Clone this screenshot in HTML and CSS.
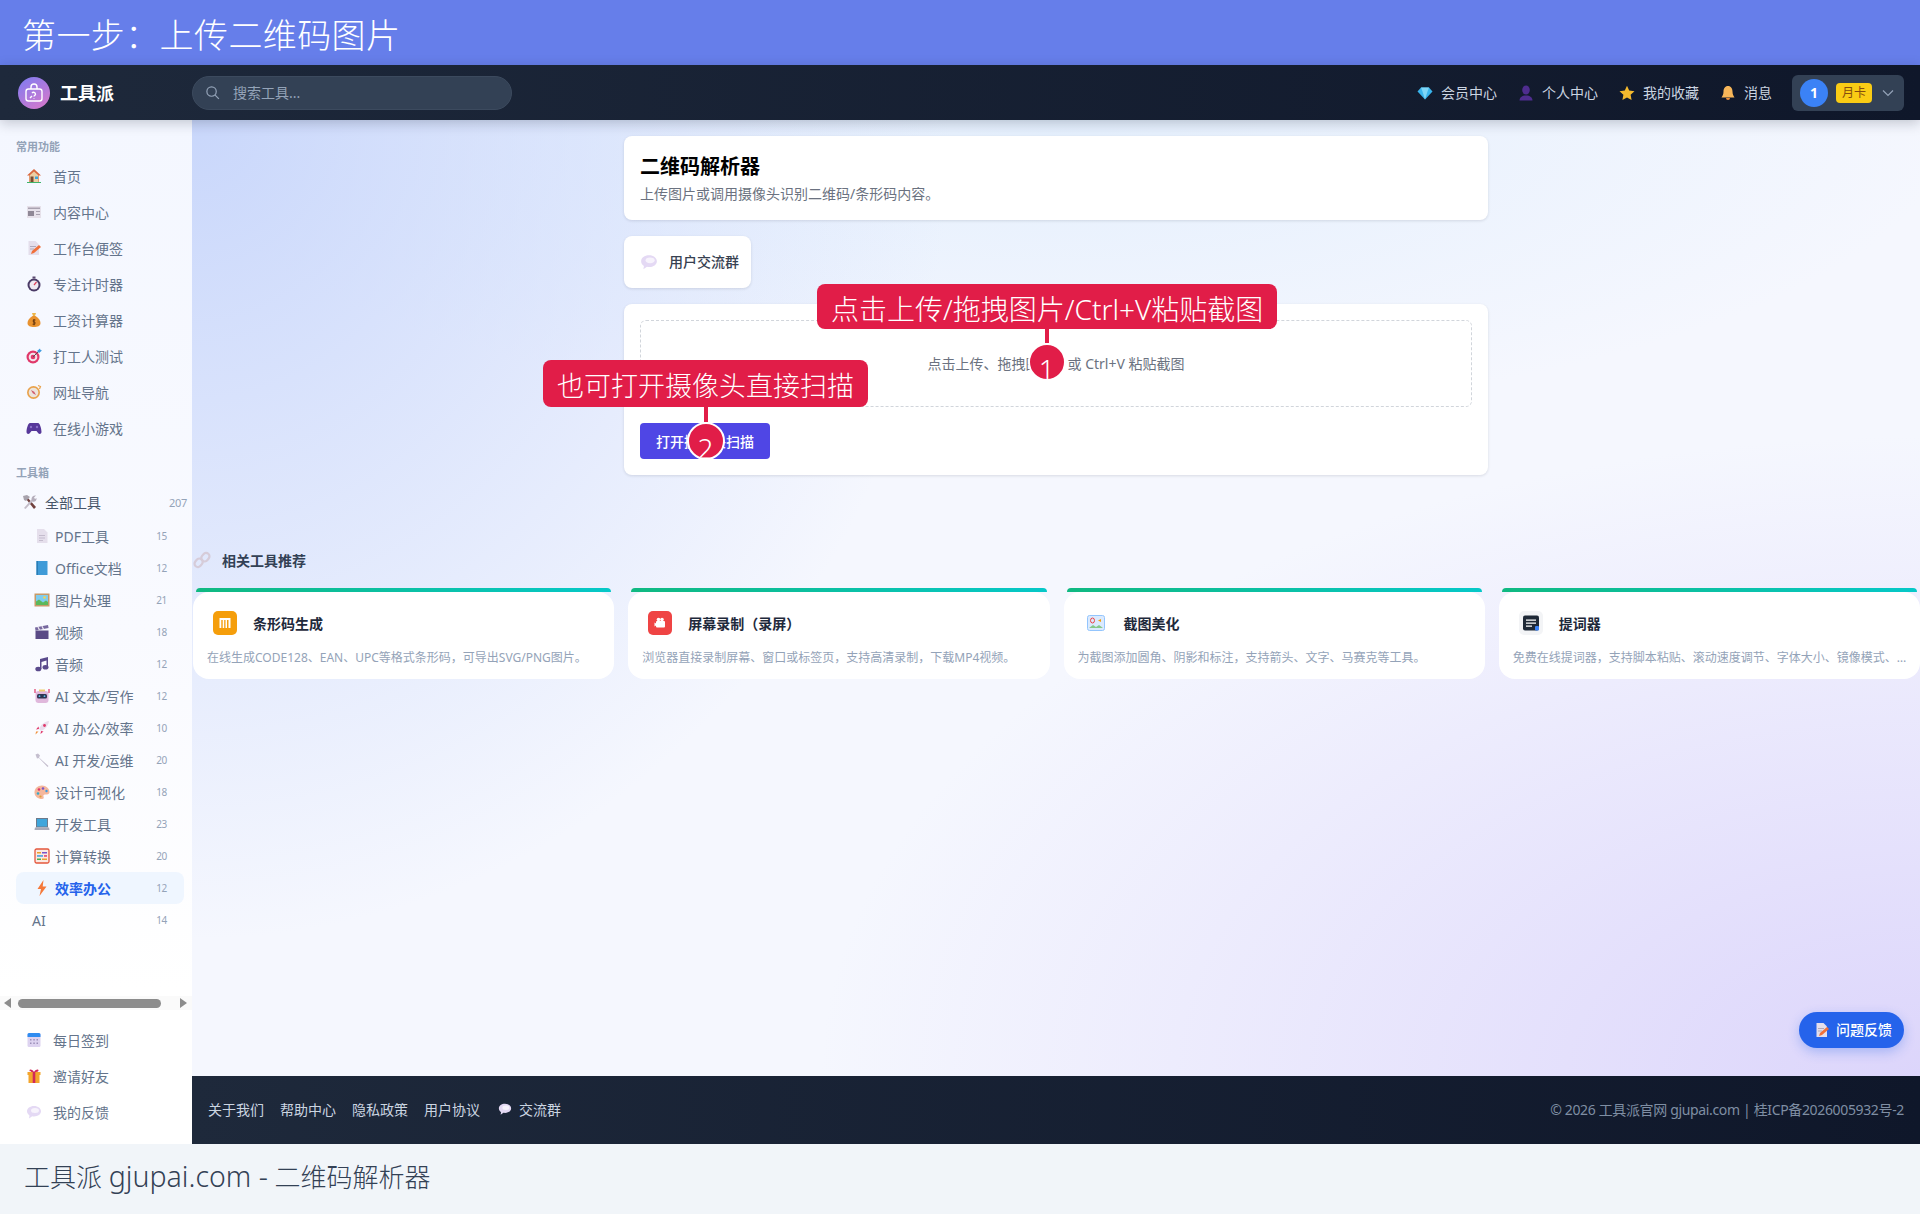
FILE: index.html
```html
<!DOCTYPE html>
<html lang="zh-CN">
<head>
  <meta charset="UTF-8">
  <title>二维码解析器 - 工具派</title>
  <link rel="stylesheet" href="styles.css">
</head>
<body>
  <svg class="sprite" xmlns="http://www.w3.org/2000/svg">
    <symbol id="i-house" viewBox="0 0 16 16"><path d="M8 1 1 7.500h2V14h10V7.500h2z" fill="#d9683f"/><path d="M3.500 7.500 8 3.500l4.500 4V14h-9z" fill="#eccfa4"/><rect x="4.500" y="8.500" width="3" height="5.500" fill="#7a4a30"/><rect x="9" y="8.500" width="3" height="2.500" fill="#3fa6dc"/><rect x="1" y="14" width="14" height="1" fill="#3fb56b"/></symbol>
    <symbol id="i-news" viewBox="0 0 16 16"><rect x="1" y="2" width="14" height="12" fill="#e6e1ea"/><rect x="2" y="3.500" width="12" height="1.500" fill="#a9a2b0"/><rect x="2" y="7" width="6" height="5" fill="#8f8896"/><rect x="10" y="7" width="4" height="1" fill="#a9a2b0"/><rect x="10" y="10" width="4" height="1" fill="#a9a2b0"/></symbol>
    <symbol id="i-memo" viewBox="0 0 16 16"><path d="M2.500 1h7l3.500 3.500V15h-10.500z" fill="#e4deeb"/><path d="M4 6h6v1H4zM4 8.500h4v1H4z" fill="#b0a9ba"/><path d="m5 14 1-3 7-6 2 2-7 6z" fill="#f0703a"/></symbol>
    <symbol id="i-watch" viewBox="0 0 16 16"><rect x="6.500" y="0.500" width="3" height="2" fill="#5b4a70"/><circle cx="8" cy="9" r="6.500" fill="#4a3a66"/><circle cx="8" cy="9" r="4.500" fill="#efe8f2"/><path d="M8 9l2.500-3" stroke="#e0405a" stroke-width="1.200"/></symbol>
    <symbol id="i-money" viewBox="0 0 16 16"><path d="M6 1h4l-1 3H7z" fill="#edb64a"/><path d="M6.500 4h3C13 6 14.500 9 14.500 11c0 3-3 4-6.500 4s-6.500-1-6.500-4c0-2 1.500-5 5-7z" fill="#e8922f"/><path d="M9.500 8H7.300v2h1.600v2.200H6.600M8 7v6.300" stroke="#6a3a10" stroke-width="1" fill="none"/></symbol>
    <symbol id="i-dart" viewBox="0 0 16 16"><circle cx="7" cy="9" r="6.500" fill="#e0386a"/><circle cx="7" cy="9" r="4.300" fill="#f3e3ea"/><circle cx="7" cy="9" r="2.300" fill="#e0386a"/><path d="M7 9l6-6" stroke="#555" stroke-width="1"/><path d="M11 3l3-2.500.5 1.500 1.500.500L13 5z" fill="#3c9be0"/></symbol>
    <symbol id="i-compass" viewBox="0 0 16 16"><circle cx="7.500" cy="8.500" r="6.500" fill="#e9a24c"/><circle cx="7.500" cy="8.500" r="4.800" fill="#ece4dc"/><path d="M5 6l3.200 1.800L10 11 6.800 9.200z" fill="#d0586a"/><path d="M12 1.500l2.500 1-1 2.500" stroke="#e9a24c" stroke-width="1.200" fill="none"/></symbol>
    <symbol id="i-pad" viewBox="0 0 16 16"><path d="M4 3h8c2 0 3.500 6 3.500 9 0 2-2 2.500-3 1.500L10.500 11h-5l-2 2.500c-1 1-3 .500-3-1.500 0-3 1.500-9 3.500-9z" fill="#57389a"/><circle cx="5" cy="7" r="1.200" fill="#8a70c8"/><circle cx="11" cy="7" r="1.200" fill="#8a70c8"/></symbol>
    <symbol id="i-tools" viewBox="0 0 16 16"><path d="M13 15 5 5l1.500-1.500L15 13z" fill="#71413e"/><path d="M2 2l4-1 3 2-4 4-2-1z" fill="#a8a3ad"/><path d="M3 14 11 5l1.500 1.500L4.500 15z" fill="#c3bcc8"/><path d="M10.500 5c0-2 2-4 4.500-3.500L13 3.500 14 5l1.500-1c.5 2.500-2 4.500-4 3.500z" fill="#b5aebb"/></symbol>
    <symbol id="i-page" viewBox="0 0 16 16"><path d="M3 1h7l3.500 3.500V15H3z" fill="#e5dfec"/><path d="M5 7h6v1H5zM5 9.500h6v1H5zM5 12h4v1H5z" fill="#c4bccd"/></symbol>
    <symbol id="i-book" viewBox="0 0 16 16"><rect x="2.500" y="1" width="11" height="14" fill="#3f9bd8"/><rect x="2.500" y="1" width="1.500" height="14" fill="#2b7db5"/></symbol>
    <symbol id="i-pic" viewBox="0 0 16 16"><rect x="0.500" y="1.500" width="15" height="13" fill="#c89a68"/><rect x="2" y="3" width="12" height="10" fill="#7fcdf0"/><path d="M2 13V9.500l3-2 4 3 3-2 2 1.500V13z" fill="#5cb85c"/><circle cx="10.500" cy="5.500" r="1.300" fill="#f7d34f"/></symbol>
    <symbol id="i-clap" viewBox="0 0 16 16"><rect x="1.500" y="6.500" width="13" height="8.500" fill="#5a4a86"/><path d="M1 3.500 14 1l.6 3L1.500 6.500z" fill="#77689f"/><path d="m4 3 1.500 3M8 2.300l1.500 3" stroke="#e8e2ee" stroke-width="1.300"/></symbol>
    <symbol id="i-music" viewBox="0 0 16 16"><path d="M6 3 14 1v10h-1.500V4.500L7.500 6V13H6z" fill="#5a4a8c"/><ellipse cx="4.300" cy="13" rx="3" ry="2.300" fill="#5a4a8c"/><ellipse cx="11.500" cy="11.300" rx="3" ry="2.300" fill="#5a4a8c"/></symbol>
    <symbol id="i-robot" viewBox="0 0 16 16"><rect x="1.500" y="3" width="13" height="12" rx="3" fill="#e0b8dc"/><rect x="3" y="6" width="10" height="4.500" rx="1.500" fill="#2f3550"/><circle cx="5.500" cy="8.200" r=".9" fill="#5fc0f0"/><circle cx="10.500" cy="8.200" r=".9" fill="#5fc0f0"/><path d="M1 1v4M15 1v4" stroke="#e0386a" stroke-width="1.200"/><rect x="5" y="1.500" width="6" height="2" fill="#f0cf70"/></symbol>
    <symbol id="i-rocket" viewBox="0 0 16 16"><path d="M15 1C10.500 1.500 6.500 5 5 9l2 2c4-1.500 7.500-5.500 8-10z" fill="#eadcec"/><path d="M5 9 2 9.500 4.500 6.500zM7 11l-.5 3 3-2.500z" fill="#e0386a"/><path d="M4.500 11.500 1.500 14.500l.5-3z" fill="#f0903a"/><circle cx="10.500" cy="5.500" r="1.400" fill="#e0386a"/></symbol>
    <symbol id="i-wrench" viewBox="0 0 16 16"><path d="M1.500 2.500 4 1.500 6 3.500l-1 2 9.500 8.500-1 1L5 6 3 6.500z" fill="#c5bfcf"/></symbol>
    <symbol id="i-palette" viewBox="0 0 16 16"><path d="M8 1.500C3.500 1.500 0.500 4.500 0.500 8.500S4 15 8 15c2 0 2-1.500 1.500-2.500s0-2 1.500-2h2c1.500 0 2.500-1 2.500-2.500 0-3.500-3.500-6.500-7.500-6.500z" fill="#f5b79c"/><circle cx="5" cy="5.500" r="1.300" fill="#e0386a"/><circle cx="9" cy="4.500" r="1.300" fill="#7a55c8"/><circle cx="12.500" cy="7" r="1.200" fill="#3c9be0"/><circle cx="4" cy="9.500" r="1.300" fill="#38a8c8"/><circle cx="6.500" cy="12.500" r="1.100" fill="#e0a030"/></symbol>
    <symbol id="i-laptop" viewBox="0 0 16 16"><rect x="2" y="2" width="12" height="9.500" fill="#6c7a8c"/><rect x="3" y="3" width="10" height="7.500" fill="#3fa6dc"/><path d="M1 11.500h14l.5 2.500H.5z" fill="#a8aab8"/></symbol>
    <symbol id="i-abacus" viewBox="0 0 16 16"><rect x="1" y="1" width="14" height="14" rx="1.500" fill="#fbe9e2" stroke="#e4573d" stroke-width="1.300"/><path d="M3 4h4v1.500H3z" fill="#e9a030"/><path d="M8 4h5v1.500H8z" fill="#7a55c8"/><path d="M3 7.200h6v1.500H3z" fill="#3c9be0"/><path d="M10 7.200h3v1.500h-3z" fill="#e0386a"/><path d="M3 10.500h4V12H3z" fill="#4caf50"/><path d="M8 10.500h5V12H8z" fill="#e9a030"/></symbol>
    <symbol id="i-bolt" viewBox="0 0 16 16"><path d="M9.500 0 3.500 9H7l-1.500 7L12.500 6.500H8.700z" fill="#f5793a"/></symbol>
    <symbol id="i-cal" viewBox="0 0 16 16"><rect x="1.500" y="1" width="13" height="14" rx="1.500" fill="#ddd3f0"/><path d="M1.500 5V2.500A1.500 1.500 0 0 1 3 1h10a1.500 1.500 0 0 1 1.500 1.500V5z" fill="#2f8cf0"/><path d="M4 7h1.500v1.500H4zM7.300 7h1.500v1.500H7.300zM10.500 7H12v1.500h-1.500zM4 10.500h1.500V12H4zM7.300 10.500h1.500V12H7.300zM10.500 10.500H12V12h-1.500z" fill="#9b8fb8"/></symbol>
    <symbol id="i-gift" viewBox="0 0 16 16"><rect x="1.500" y="4" width="13" height="3" fill="#f3a52c"/><rect x="2.500" y="7" width="11" height="8" fill="#f3a52c"/><rect x="6.700" y="4" width="2.600" height="11" fill="#d2285a"/><path d="M8 4C6 1 3.500 1 3.500 2.500S6 4 8 4c2 0 4.500 0 4.500-1.500S10 1 8 4z" fill="#d2285a"/></symbol>
    <symbol id="i-bubble" viewBox="0 0 16 16"><path d="M8 2C4 2 1 4.300 1 7.300c0 1.700 1 3.200 2.500 4.200L3 14.500l3.200-2.200c.6.1 1.200.2 1.800.2 4 0 7-2.300 7-5.200S12 2 8 2z" fill="#e4d9f4"/><ellipse cx="9" cy="6.500" rx="4" ry="2.500" fill="#f7f3fc"/></symbol>
    <symbol id="i-link" viewBox="0 0 16 16"><g fill="none" stroke="#d6ccd9" stroke-width="2"><rect x="8" y="1.500" width="6" height="8" rx="3" transform="rotate(40 11 5.500)"/><rect x="2" y="6.500" width="6" height="8" rx="3" transform="rotate(40 5 10.500)"/></g></symbol>
    <symbol id="i-gem" viewBox="0 0 16 16"><path d="M4 2.500h8l3.500 4L8 14.500.5 6.500z" fill="#39b4ec"/><path d="M4 2.500h8l-1.500 4h-5zM5.500 6.500h5L8 14.500z" fill="#7fd6f7"/></symbol>
    <symbol id="i-user" viewBox="0 0 16 16"><ellipse cx="8" cy="5" rx="3.800" ry="4.500" fill="#4f2d8f"/><path d="M1.500 15.500c0-3 2.500-5 6.500-5s6.500 2 6.500 5z" fill="#4f2d8f"/></symbol>
    <symbol id="i-star" viewBox="0 0 16 16"><path d="m8 .8 2.200 4.800 5.300.6-3.900 3.600 1 5.200L8 12.400 3.400 15l1-5.200L.5 6.200l5.300-.6z" fill="#f4b92e"/></symbol>
    <symbol id="i-bell" viewBox="0 0 16 16"><path d="M8 1c-3 0-4.500 2.500-4.500 5.500 0 3-1 4.500-2 6h13c-1-1.500-2-3-2-6C12.500 3.500 11 1 8 1z" fill="#f7b659"/><path d="M6 13h4a2 2 0 0 1-4 0z" fill="#ee8f3a"/></symbol>
    <symbol id="i-search" viewBox="0 0 16 16"><circle cx="7" cy="7" r="5" fill="none" stroke="currentColor" stroke-width="1.300"/><path d="m10.800 10.800 4 4" stroke="currentColor" stroke-width="1.300"/></symbol>
  </svg>

  <div class="page">
    <div class="banner">第一步：上传二维码图片</div>

    <div class="app">
      <header class="topbar">
        <div class="brand">
          <span class="brand-logo">
            <svg viewBox="0 0 24 24" width="24" height="24" fill="none" stroke="#fff" stroke-width="1.400"><rect x="4" y="8" width="16" height="12" rx="2.500"/><path d="M9 8V6a3 3 0 0 1 6 0v2"/><path d="M10 12a2 2 0 0 1 3.500 1.300c0 1-1.500 1.300-1.500 2.200M12 17.500v.5M8 17l2-2"/></svg>
          </span>
          <span class="brand-name">工具派</span>
        </div>
        <div class="search">
          <svg class="search-icon"><use href="#i-search"/></svg>
          <span>搜索工具...</span>
        </div>
        <nav class="top-links">
          <a><svg class="ic"><use href="#i-gem"/></svg><span>会员中心</span></a>
          <a><svg class="ic"><use href="#i-user"/></svg><span>个人中心</span></a>
          <a><svg class="ic"><use href="#i-star"/></svg><span>我的收藏</span></a>
          <a><svg class="ic"><use href="#i-bell"/></svg><span>消息</span></a>
        </nav>
        <div class="account">
          <span class="avatar">1</span>
          <span class="plan">月卡</span>
          <svg class="chevron" viewBox="0 0 12 8" width="12" height="8"><path d="m1 1.500 5 5 5-5" fill="none" stroke="#94a3b8" stroke-width="1.200"/></svg>
        </div>
      </header>

      <div class="body-row">
        <aside class="sidebar">
          <div class="side-scroll">
            <div class="side-label">常用功能</div>
            <a class="side-item"><svg class="ic"><use href="#i-house"/></svg>首页</a>
            <a class="side-item"><svg class="ic"><use href="#i-news"/></svg>内容中心</a>
            <a class="side-item"><svg class="ic"><use href="#i-memo"/></svg>工作台便签</a>
            <a class="side-item"><svg class="ic"><use href="#i-watch"/></svg>专注计时器</a>
            <a class="side-item"><svg class="ic"><use href="#i-money"/></svg>工资计算器</a>
            <a class="side-item"><svg class="ic"><use href="#i-dart"/></svg>打工人测试</a>
            <a class="side-item"><svg class="ic"><use href="#i-compass"/></svg>网址导航</a>
            <a class="side-item"><svg class="ic"><use href="#i-pad"/></svg>在线小游戏</a>

            <div class="side-label second">工具箱</div>
            <a class="all-tools"><svg class="ic"><use href="#i-tools"/></svg><span>全部工具</span><em>207</em></a>
            <div class="cats">
              <a class="cat"><svg class="ic"><use href="#i-page"/></svg><span>PDF工具</span><em>15</em></a>
              <a class="cat"><svg class="ic"><use href="#i-book"/></svg><span>Office文档</span><em>12</em></a>
              <a class="cat"><svg class="ic"><use href="#i-pic"/></svg><span>图片处理</span><em>21</em></a>
              <a class="cat"><svg class="ic"><use href="#i-clap"/></svg><span>视频</span><em>18</em></a>
              <a class="cat"><svg class="ic"><use href="#i-music"/></svg><span>音频</span><em>12</em></a>
              <a class="cat"><svg class="ic"><use href="#i-robot"/></svg><span>AI 文本/写作</span><em>12</em></a>
              <a class="cat"><svg class="ic"><use href="#i-rocket"/></svg><span>AI 办公/效率</span><em>10</em></a>
              <a class="cat"><svg class="ic"><use href="#i-wrench"/></svg><span>AI 开发/运维</span><em>20</em></a>
              <a class="cat"><svg class="ic"><use href="#i-palette"/></svg><span>设计可视化</span><em>18</em></a>
              <a class="cat"><svg class="ic"><use href="#i-laptop"/></svg><span>开发工具</span><em>23</em></a>
              <a class="cat"><svg class="ic"><use href="#i-abacus"/></svg><span>计算转换</span><em>20</em></a>
              <a class="cat active"><svg class="ic"><use href="#i-bolt"/></svg><span>效率办公</span><em>12</em></a>
              <a class="cat plain"><span>AI</span><em>14</em></a>
            </div>
          </div>
          <div class="fake-scroll">
            <i class="arrow left"></i>
            <i class="thumb"></i>
            <i class="arrow right"></i>
          </div>
          <div class="side-foot">
            <a class="side-item"><svg class="ic"><use href="#i-cal"/></svg>每日签到</a>
            <a class="side-item"><svg class="ic"><use href="#i-gift"/></svg>邀请好友</a>
            <a class="side-item"><svg class="ic"><use href="#i-bubble"/></svg>我的反馈</a>
          </div>
        </aside>

        <div class="main">
          <main class="content">
            <div class="column">
              <section class="card intro">
                <h1>二维码解析器</h1>
                <p>上传图片或调用摄像头识别二维码/条形码内容。</p>
              </section>
              <a class="card group-link"><svg class="ic"><use href="#i-bubble"/></svg><span>用户交流群</span></a>
              <section class="card uploader">
                <div class="dropzone"><span>点击上传、拖拽图片，或 Ctrl+V 粘贴截图</span></div>
                <button class="cam-btn">打开摄像头扫描</button>
              </section>
            </div>

            <section class="related">
              <h2><svg class="ic"><use href="#i-link"/></svg>相关工具推荐</h2>
              <div class="related-grid">
                <article class="tool">
                  <div class="tool-bar"></div>
                  <div class="tool-body">
                    <div class="tool-head">
                      <span class="tool-icon orange"><svg viewBox="0 0 16 16" width="16" height="16"><path d="M2.500 3h11v10h-2V5h-1.500v8H8.500V5H7.200v8H5.700V5H4.300v8H2.500z" fill="#fff"/></svg></span>
                      <h3>条形码生成</h3>
                    </div>
                    <p>在线生成CODE128、EAN、UPC等格式条形码，可导出SVG/PNG图片。</p>
                  </div>
                </article>
                <article class="tool">
                  <div class="tool-bar"></div>
                  <div class="tool-body">
                    <div class="tool-head">
                      <span class="tool-icon red"><svg viewBox="0 0 16 16" width="16" height="16"><rect x="4" y="6" width="9" height="6.500" rx="1" fill="#fff"/><circle cx="6.500" cy="4.500" r="1.800" fill="#fff"/><circle cx="10" cy="4.500" r="1.800" fill="#fff"/><path d="M2.500 7.500 4 8.500v2l-1.500 1z" fill="#fff"/></svg></span>
                      <h3>屏幕录制（录屏）</h3>
                    </div>
                    <p>浏览器直接录制屏幕、窗口或标签页，支持高清录制，下载MP4视频。</p>
                  </div>
                </article>
                <article class="tool">
                  <div class="tool-bar"></div>
                  <div class="tool-body">
                    <div class="tool-head">
                      <span class="tool-icon"><svg viewBox="0 0 20 20" width="20" height="20"><rect x="1.500" y="2.500" width="17" height="15" rx="2" fill="#dbeafe" stroke="#93c5fd"/><ellipse cx="6.500" cy="7.500" rx="2" ry="2.500" fill="none" stroke="#ef4444"/><path d="m15 6-3 1.500 3 1.500z" fill="#f59e0b"/><path d="M3 15l4-3 3 2 3-2 4 3z" fill="#86c98a"/></svg></span>
                      <h3>截图美化</h3>
                    </div>
                    <p>为截图添加圆角、阴影和标注，支持箭头、文字、马赛克等工具。</p>
                  </div>
                </article>
                <article class="tool">
                  <div class="tool-bar"></div>
                  <div class="tool-body">
                    <div class="tool-head">
                      <span class="tool-icon grey"><svg viewBox="0 0 18 18" width="18" height="18"><rect x="1" y="1.500" width="16" height="15" rx="2" fill="#1f2937"/><path d="M4 5.500h10v1.300H4zM4 8.500h10v1.300H4zM4 11.500h6v1.300H4z" fill="#fff"/><rect x="13" y="12" width="4" height="4.500" rx="1" fill="#3b82f6"/></svg></span>
                      <h3>提词器</h3>
                    </div>
                    <p>免费在线提词器，支持脚本粘贴、滚动速度调节、字体大小、镜像模式、倒计时等功能。</p>
                  </div>
                </article>
              </div>
            </section>
          </main>

          <footer class="footer">
            <div class="foot-links">
              <a>关于我们</a>
              <a>帮助中心</a>
              <a>隐私政策</a>
              <a>用户协议</a>
              <a class="foot-group"><svg class="ic small"><use href="#i-bubble"/></svg>交流群</a>
            </div>
            <div class="copyright">© 2026 工具派官网 gjupai.com | 桂ICP备2026005932号-2</div>
          </footer>

          <a class="feedback"><svg class="ic"><use href="#i-memo"/></svg><span>问题反馈</span></a>
        </div>
      </div>
    </div>

    <div class="caption">工具派 <span class="latin">gjupai.com -</span> 二维码解析器</div>
  </div>

  <!-- 标注层 -->
  <div class="note note-one">
    <div class="note-label">点击上传/拖拽图片/Ctrl+V粘贴截图</div>
    <div class="note-line"></div>
    <div class="note-dot"><span>1</span></div>
  </div>
  <div class="note note-two">
    <div class="note-label">也可打开摄像头直接扫描</div>
    <div class="note-line"></div>
    <div class="note-dot"><span>2</span></div>
  </div>
</body>
</html>
```

FILE: styles.css
```css
* { box-sizing: border-box; }
html, body {
  margin: 0;
  height: 100%;
}
body {
  font-family: "Noto Sans", "Noto Sans CJK SC", sans-serif;
  color: #334155;
  overflow: hidden;
  position: relative;
}
a { display: flex; align-items: center; }
h1, h2, h3, p { margin: 0; }
.sprite { display: none; }

.page {
  height: 1214px;
  display: flex;
  flex-direction: column;
}
.banner {
  height: 65px;
  padding-left: 22px;
  background: #667eea;
  color: #fff;
  font-size: 34px;
  font-weight: 300;
  letter-spacing: .4px;
  line-height: 70px;
}
.caption {
  height: 70px;
  padding-left: 24px;
  background: #f1f5f9;
  color: #334155;
  font-size: 26px;
  line-height: 65px;
  font-weight: 300;
}
.caption .latin { font-size: 28.5px; }
.app {
  flex: 1;
  display: flex;
  flex-direction: column;
  min-height: 0;
}

/* 顶栏 */
.topbar {
  height: 55px;
  display: flex;
  align-items: center;
  background: linear-gradient(90deg, #1e293b, #0f172a);
  box-shadow: 0 3px 12px rgba(15, 23, 42, .22);
  position: relative;
  z-index: 2;
  padding-right: 16px;
}
.brand {
  width: 192px;
  display: flex;
  align-items: center;
  padding-left: 18px;
  gap: 10px;
}
.brand-logo {
  width: 32px;
  height: 32px;
  border-radius: 50%;
  background: linear-gradient(145deg, #7c7cf2, #dd78c8);
  display: flex;
  align-items: center;
  justify-content: center;
}
.brand-name {
  color: #fff;
  font-size: 18px;
  font-weight: 700;
  padding-bottom: 2px;
}
.search {
  width: 320px;
  height: 34px;
  border-radius: 17px;
  background: #334155;
  border: 1px solid #3c4a5e;
  display: flex;
  align-items: center;
  padding: 0 0 2px 12px;
  gap: 13px;
  color: #94a3b8;
  font-size: 14px;
}
.search-icon {
  width: 15px;
  height: 15px;
  color: #94a3b8;
  margin-top: 2px;
}
.top-links {
  margin-left: auto;
  display: flex;
  gap: 21px;
  font-size: 14px;
  color: #cbd5e1;
}
.top-links a { gap: 8px; }
.top-links span { padding-bottom: 2px; }
.top-links .ic { width: 16px; height: 16px; }
.ic {
  width: 16px;
  height: 16px;
  flex: none;
}
.ic.small { width: 14px; height: 14px; }
.account {
  margin-left: 20px;
  width: 112px;
  height: 36px;
  background: #334155;
  border-radius: 6px;
  display: flex;
  align-items: center;
  padding-left: 8px;
}
.avatar {
  width: 28px;
  height: 28px;
  border-radius: 50%;
  background: #3b82f6;
  color: #fff;
  font-size: 14px;
  font-weight: 700;
  display: flex;
  align-items: center;
  justify-content: center;
}
.plan {
  width: 36px;
  height: 20px;
  margin-left: 8px;
  border-radius: 4px;
  background: #facc15;
  color: #854d0e;
  font-size: 12px;
  line-height: 20px;
  text-align: center;
}
.chevron { margin-left: 10px; }

/* 侧栏 */
.body-row {
  flex: 1;
  display: flex;
  min-height: 0;
}
.sidebar {
  width: 192px;
  flex: none;
  display: flex;
  flex-direction: column;
  background: linear-gradient(180deg, #f4f7ff 0%, #f9faff 50%, #fff 85%);
  font-size: 14px;
  color: #64748b;
}
.side-scroll {
  flex: 1;
  padding-top: 19px;
}
.side-label {
  height: 16px;
  padding-left: 16px;
  font-size: 11px;
  font-weight: 700;
  line-height: 16px;
  color: #94a3b8;
  margin-bottom: 3px;
}
.side-label.second { margin-top: 19px; margin-bottom: 5px; }
.side-item {
  height: 36px;
  padding-left: 26px;
  gap: 11px;
  color: #64748b;
}
.all-tools {
  height: 32px;
  padding-left: 21px;
  padding-right: 5px;
  gap: 8px;
  color: #475569;
}
.all-tools span { flex: 1; }
em {
  font-style: normal;
  font-size: 11px;
  letter-spacing: -.3px;
  color: #94a3b8;
}
.cats {
  margin: 2px 8px 0 16px;
}
.cat {
  height: 32px;
  padding: 0 17px 0 18px;
  gap: 5px;
  border-radius: 8px;
  color: #64748b;
}
.cat span { flex: 1; }
.cat em { font-size: 10px; }
.cat.active {
  background: #eff6ff;
}
.cat.active span {
  color: #2563eb;
  font-weight: 700;
}
.cat.plain { padding-left: 16px; }
.fake-scroll {
  height: 14px;
  display: flex;
  align-items: center;
  background: #fafafa;
  margin-bottom: 12px;
  padding: 0 5px 0 4px;
}
.thumb {
  display: block;
  width: 143px;
  height: 9px;
  margin: 0 19px 0 7px;
  border-radius: 5px;
  background: #8c8c8c;
}
.arrow {
  display: block;
  width: 0;
  height: 0;
  border-top: 5px solid transparent;
  border-bottom: 5px solid transparent;
}
.arrow.left { border-right: 7px solid #8c8c8c; }
.arrow.right { border-left: 7px solid #8c8c8c; }
.side-foot { padding-bottom: 14px; }

/* 主区 */
.main {
  flex: 1;
  min-width: 0;
  display: flex;
  flex-direction: column;
  position: relative;
}
.content {
  flex: 1;
  padding-top: 16px;
  background:
    radial-gradient(ellipse 1100px 640px at 100% 100%, #dcd5fb 0%, rgba(220, 213, 251, 0) 100%),
    radial-gradient(ellipse 760px 820px at 0 0, #c9d7fb 0%, rgba(201, 215, 251, 0) 100%),
    radial-gradient(ellipse 900px 300px at 50% 0, #e4effd 0%, rgba(228, 239, 253, 0) 100%),
    #f5f7fe;
}
.column {
  width: 864px;
  margin: 0 auto;
  display: flex;
  flex-direction: column;
  align-items: flex-start;
  gap: 16px;
}
.card {
  background: #fff;
  border-radius: 8px;
  box-shadow: 0 1px 3px rgba(15, 23, 42, .12);
  padding: 16px;
}
.intro {
  width: 100%;
  height: 84px;
}
.intro h1 {
  font-size: 20px;
  line-height: 30px;
  color: #000;
  font-weight: 700;
}
.intro p {
  font-size: 14px;
  line-height: 20px;
  margin-top: 2px;
  color: #6b7280;
}
.group-link {
  width: 127px;
  height: 52px;
  padding: 0 0 0 16px;
  gap: 11px;
  font-size: 14px;
  font-weight: 500;
  color: #374151;
}
.group-link span { padding-bottom: 2px; white-space: nowrap; }
.group-link .ic { width: 18px; height: 18px; }
.uploader {
  width: 100%;
  height: 171px;
}
.dropzone {
  height: 87px;
  border: 1.5px dashed #d1d5db;
  border-radius: 6px;
  display: flex;
  align-items: center;
  justify-content: center;
  padding-bottom: 2px;
  font-size: 14px;
  color: #6b7280;
}
.cam-btn {
  display: block;
  width: 130px;
  height: 36px;
  margin-top: 16px;
  border: 0;
  border-radius: 4px;
  background: #4f46e5;
  color: #fff;
  font: 500 14px "Noto Sans", "Noto Sans CJK SC", sans-serif;
}

/* 相关工具 */
.related {
  margin-top: 75px;
  padding-left: 1px;
}
.related h2 {
  display: flex;
  align-items: center;
  gap: 11px;
  height: 20px;
  font-size: 14px;
  font-weight: 700;
  color: #334155;
  margin-bottom: 18px;
}
.related h2 .ic { width: 18px; height: 18px; }
.related-grid {
  display: grid;
  grid-template-columns: repeat(4, 1fr);
  gap: 14px;
}
.tool { min-width: 0; }
.tool-bar {
  height: 4px;
  margin: 0 3px;
  border-radius: 4px 4px 0 0;
  background: linear-gradient(90deg, #10b981, #06c8c8);
}
.tool-body {
  height: 87px;
  background: #fff;
  border-radius: 16px;
  padding: 19px 8px 0 14px;
}
.tool-head {
  display: flex;
  align-items: center;
  padding-left: 6px;
  gap: 16px;
}
.tool-icon {
  width: 24px;
  height: 24px;
  border-radius: 5px;
  flex: none;
  display: flex;
  align-items: center;
  justify-content: center;
}
.tool-icon.orange { background: #f59e0b; }
.tool-icon.red { background: #ef4444; }
.tool-icon.grey { background: #f3f4f6; }
.tool h3 {
  font-size: 14px;
  font-weight: 700;
  color: #1e293b;
}
.tool p {
  margin-top: 13px;
  font-size: 12px;
  line-height: 20px;
  color: #94a3b8;
  white-space: nowrap;
  overflow: hidden;
  text-overflow: ellipsis;
}

/* 页脚 */
.footer {
  height: 68px;
  flex: none;
  background: linear-gradient(90deg, #1e293b, #0f172a);
  display: flex;
  align-items: center;
  justify-content: space-between;
  padding: 0 16px 2px;
  font-size: 14px;
}
.foot-links {
  display: flex;
  gap: 16px;
  color: #cbd5e1;
}
.foot-group { gap: 7px; margin-left: 2px; }
.copyright {
  color: #7f8ea3;
  letter-spacing: -.35px;
}
.feedback {
  position: absolute;
  right: 16px;
  bottom: 96px;
  width: 105px;
  height: 36px;
  border-radius: 18px;
  background: #2563eb;
  box-shadow: 0 4px 12px rgba(37, 99, 235, .3);
  color: #fff;
  font-size: 14px;
  font-weight: 500;
  padding-left: 15px;
  gap: 6px;
}
.feedback span { padding-bottom: 2px; }

/* 标注层 */
.note {
  position: absolute;
  display: flex;
  flex-direction: column;
  align-items: center;
  z-index: 5;
}
.note-one { left: 817px; top: 284px; }
.note-two { left: 543px; top: 360px; }
.note-label {
  height: 45px;
  padding: 0 14px;
  border-radius: 8px;
  background: #e11d48;
  color: #fff;
  font-size: 28px;
  font-weight: 300;
  line-height: 50px;
  white-space: nowrap;
}
.note-two .note-label { height: 47px; font-size: 27px; line-height: 52px; }
.note-line {
  width: 4px;
  height: 14px;
  background: #e11d48;
}
.note-one .note-line { margin-left: -1px; }
.note-two .note-line { height: 15px; }
.note-dot {
  width: 38px;
  height: 38px;
  border: 2px solid #fff;
  border-radius: 50%;
  background: #e11d48;
  color: #fff;
  font-size: 28px;
  font-weight: 300;
  line-height: 48px;
  text-align: center;
  overflow: hidden;
}
.note-one .note-dot { margin-left: -1px; }
```
